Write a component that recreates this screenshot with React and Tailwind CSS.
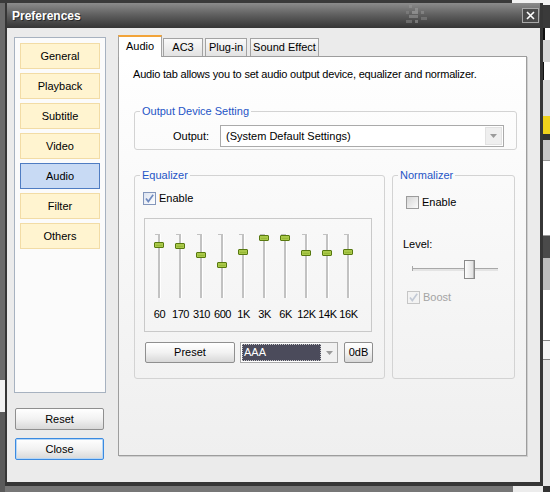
import React from 'react';

const bands = [
  ['60', 11],
  ['170', 12],
  ['310', 21],
  ['600', 31],
  ['1K', 18],
  ['3K', 4],
  ['6K', 4],
  ['12K', 19],
  ['14K', 19],
  ['16K', 18],
];

const sections = ['General', 'Playback', 'Subtitle', 'Video', 'Audio', 'Filter', 'Others'];

function Check({ checked, disabled }) {
  const box = disabled
    ? 'border-[#c6c6c6] bg-[#f3f3f3]'
    : checked
    ? 'border-[#8396bb] bg-linear-to-br from-[#dce3f0] to-white'
    : 'border-[#9c9c9c] bg-linear-to-br from-[#d6d6d6] to-[#fbfbfb]';
  return (
    <span className={`flex h-[13px] w-[13px] shrink-0 items-center justify-center border ${box}`}>
      {checked && (
        <svg viewBox="0 0 11 11" className="h-[11px] w-[11px]">
          <path d="M2 5.5 L4.3 8.5 L9.2 1.8" fill="none" stroke={disabled ? '#c3cad6' : '#6f8ac0'} strokeWidth="1.7" />
        </svg>
      )}
    </span>
  );
}

function Arrow() {
  return (
    <svg viewBox="0 0 7 4" className="h-[4px] w-[7px]">
      <path d="M0 0 H7 L3.5 4 Z" fill="#9a9a9a" />
    </svg>
  );
}

function Button({ children, className = '', focused }) {
  return (
    <button
      className={`flex items-center justify-center rounded-[2px] border bg-linear-to-b from-white via-[#f2f2f2] to-[#d8d8d8] text-[11px] ${
        focused ? 'border-[#3b8ae0] shadow-[inset_0_0_0_1px_#b5d6f6]' : 'border-[#8f8f8f]'
      } ${className}`}
    >
      {children}
    </button>
  );
}

function EqSlider({ label, pos }) {
  return (
    <div className="flex w-[21px] flex-col items-center">
      <div className="relative h-[64px] w-[21px]">
        <div className="absolute left-[9px] top-0 h-[64px] w-[2px] bg-[#c2c2c2] shadow-[1px_0_0_#ffffff]" />
        <div className="absolute left-[6px] top-0 h-px w-[3px] bg-[#c2c2c2]" />
        <div
          className="absolute left-[5px] h-[6px] w-[10px] rounded-[1px] border border-[#58790f] bg-linear-to-b from-[#c2dc5a] to-[#7ea41e] shadow-[inset_0_0_0_1px_#a9c94a]"
          style={{ top: pos - 3 }}
        />
      </div>
      <span className="mt-[9px] whitespace-nowrap leading-[14px] tracking-[-0.4px]">{label}</span>
    </div>
  );
}

export default function App() {
  return (
    <div className="flex h-[492px] w-[550px] overflow-hidden bg-[#767676] font-['Liberation_Sans',Arial,sans-serif] text-[11px] text-black">
      {/* desktop behind, left edge */}
      <div className="flex w-[5px] flex-col">
        <div className="h-[3px] bg-[#3a3a3a]" />
        <div className="h-[377px] bg-[#6b6b6b]" />
        <div className="h-[32px] bg-[#f1f1f1]" />
        <div className="flex-1 bg-[#5a5a5a]" />
      </div>

      <div className="flex w-[538px] flex-col">
        <div className="flex h-[3px]">
          <div className="flex-1 bg-[#3a3a3a]" />
          <div className="w-[31px] bg-[#f2f2f2]" />
        </div>

        {/* window */}
        <div className="flex h-[483px] flex-col border-b-4 border-l-2 border-r-[3px] border-[#363636]">
          <div className="relative flex h-[25px] items-start justify-between bg-linear-to-b from-[#8c8c8c] via-[#5d5d5d] to-[#353535] pl-[5px] pr-[1px]">
            <span className="mt-[6px] text-[12px] font-bold leading-[14px] text-white [text-shadow:1px_1px_0_#2a2a2a]">
              Preferences
            </span>
            <svg viewBox="0 0 27 20" className="absolute left-[396px] top-[2px] h-[20px] w-[27px] opacity-50">
              <rect x="6" y="0" width="3" height="3" fill="#9a9a9a" />
              <rect x="12" y="3" width="3" height="3" fill="#a5a5a5" />
              <rect x="3" y="6" width="3" height="3" fill="#8a8a8a" />
              <rect x="9" y="6" width="6" height="3" fill="#b0b0b0" />
              <rect x="18" y="6" width="3" height="3" fill="#9a9a9a" />
              <rect x="6" y="10" width="9" height="3" fill="#a0a0a0" />
              <rect x="18" y="12" width="6" height="3" fill="#8c8c8c" />
              <rect x="3" y="15" width="6" height="3" fill="#8f8f8f" />
              <rect x="12" y="15" width="3" height="3" fill="#a8a8a8" />
            </svg>
            <span className="mt-[5px] flex h-[15px] w-[17px] items-center justify-center border border-[#a8a8a8] bg-[#4a4a4a]">
              <svg viewBox="0 0 9 9" className="h-[9px] w-[9px]">
                <path d="M1 1 L8 8 M8 1 L1 8" stroke="#ffffff" strokeWidth="1.6" />
              </svg>
            </span>
          </div>

          <div className="flex h-[454px] bg-[#ebebeb] pl-[7px] pt-[9px]">
            {/* left column */}
            <div className="flex w-[92px] flex-col">
              <div className="flex h-[356px] flex-col items-center gap-[4px] border border-[#a7b2c0] bg-[#fbfbfb] pt-[5px]">
                {sections.map((s) => (
                  <div
                    key={s}
                    className={`flex h-[26px] w-[80px] items-center justify-center border ${
                      s === 'Audio' ? 'border-[#4f7cc2] bg-[#c8daf4]' : 'border-[#f2dca6] bg-[#fff4d0]'
                    }`}
                  >
                    {s}
                  </div>
                ))}
              </div>
              <Button className="ml-px mt-[15px] h-[22px] w-[89px]">Reset</Button>
              <Button className="ml-px mt-[8px] h-[22px] w-[89px]" focused>
                Close
              </Button>
            </div>

            {/* right column */}
            <div className="-mt-[2px] ml-[12px] flex w-[409px] flex-col">
              <div className="flex h-[21px] items-end">
                <div className="relative z-10 -mb-px flex h-[22px] w-[44px] items-start justify-center border border-b-0 border-t-2 border-[#a3a3a3] border-t-[#f2a43a] bg-white pt-[1px]">
                  Audio
                </div>
                <div className="ml-px flex h-[18px] w-[40px] items-center justify-center border border-b-0 border-[#a3a3a3] bg-linear-to-b from-[#fafafa] to-[#e2e2e2]">
                  AC3
                </div>
                <div className="ml-[2px] flex h-[18px] w-[42px] items-center justify-center border border-b-0 border-[#a3a3a3] bg-linear-to-b from-[#fafafa] to-[#e2e2e2]">
                  Plug-in
                </div>
                <div className="ml-[3px] flex h-[18px] w-[69px] items-center justify-center border border-b-0 border-[#a3a3a3] bg-linear-to-b from-[#fafafa] to-[#e2e2e2]">
                  Sound Effect
                </div>
              </div>

              <div className="flex h-[400px] flex-col border border-[#9d9d9d] bg-linear-to-b from-white to-[#efefef] pl-[14px] pt-[10px] shadow-[1px_1px_0_#cfcfcf]">
                <p className="leading-[14px] tracking-[-0.2px]">
                  Audio tab allows you to set audio output device, equalizer and normalizer.
                </p>

                <fieldset className="ml-px mt-[23px] w-[383px] rounded-[3px] border border-[#d3d3d3] pb-[2px]">
                  <legend className="ml-[5px] px-[2px] leading-[14px] text-[#1f55c6]">Output Device Setting</legend>
                  <div className="mt-[7px] flex items-center pl-[38px]">
                    <span className="w-[47px]">Output:</span>
                    <div className="flex h-[22px] w-[284px] items-center border border-[#aaaaaa] bg-white">
                      <span className="flex-1 pl-[5px]">(System Default Settings)</span>
                      <span className="mr-px flex h-[18px] w-[17px] items-center justify-center border border-[#e2e2e2] bg-[#efefef]">
                        <Arrow />
                      </span>
                    </div>
                  </div>
                </fieldset>

                <div className="ml-px mt-[18px] flex gap-[7px]">
                  <fieldset className="w-[251px] rounded-[3px] border border-[#d3d3d3] pb-[15px]">
                    <legend className="ml-[5px] px-[2px] leading-[14px] text-[#1f55c6]">Equalizer</legend>
                    <div className="pl-[8px]">
                      <label className="mt-[10px] flex h-[13px] items-center gap-[3px]">
                        <Check checked />
                        <span>Enable</span>
                      </label>
                      <div className="ml-px mt-[13px] h-[114px] w-[228px] border border-[#c9c9c9] pl-[4px] pt-[15px]">
                        <div className="grid grid-cols-[repeat(10,21px)]">
                          {bands.map(([label, pos]) => (
                            <EqSlider key={label} label={label} pos={pos} />
                          ))}
                        </div>
                      </div>
                      <div className="ml-[2px] mt-[10px] flex h-[21px]">
                        <Button className="h-[21px] w-[90px]">Preset</Button>
                        <div className="ml-[5px] flex h-[21px] w-[98px] items-center border border-[#aaaaaa] bg-white">
                          <span className="ml-px flex h-[17px] flex-1 items-center border border-dotted border-[#c8c8c8] bg-[#4b4b5b] pl-px text-white">
                            AAA
                          </span>
                          <span className="flex h-[19px] w-[16px] items-center justify-center bg-[#f1f1f1]">
                            <Arrow />
                          </span>
                        </div>
                        <Button className="ml-[6px] h-[21px] w-[29px]">0dB</Button>
                      </div>
                    </div>
                  </fieldset>

                  <fieldset className="w-[123px] rounded-[3px] border border-[#d3d3d3]">
                    <legend className="ml-[5px] px-[2px] leading-[14px] text-[#1f55c6]">Normalizer</legend>
                    <div className="pl-[10px]">
                      <label className="ml-[3px] mt-[14px] flex h-[13px] items-center gap-[3px]">
                        <Check />
                        <span>Enable</span>
                      </label>
                      <p className="mt-[28px] leading-[14px]">Level:</p>
                      <div className="relative ml-[9px] mt-[9px] h-[19px] w-[86px]">
                        <div className="absolute left-0 top-[8px] h-[3px] w-[86px] border-t border-[#a8a8a8] bg-[#e4e4e4]" />
                        <div className="absolute left-0 top-[6px] h-[5px] w-px bg-[#a8a8a8]" />
                        <div className="absolute left-[52px] top-0 h-[19px] w-[11px] border border-[#8a8a8a] bg-linear-to-r from-[#fdfdfd] to-[#dedede] shadow-[inset_-1px_0_0_#b8b8b8]" />
                      </div>
                      <label className="ml-[4px] mt-[12px] flex h-[13px] items-center gap-[3px]">
                        <Check checked disabled />
                        <span className="text-[#a4a4a4]">Boost</span>
                      </label>
                    </div>
                  </fieldset>
                </div>
              </div>
            </div>
          </div>
        </div>

        <div className="flex flex-1">
          <div className="flex-1 bg-[#777777]" />
          <div className="w-[30px] bg-[#ececec]" />
        </div>
      </div>

      {/* desktop behind, right edge */}
      <div className="flex w-[7px] flex-col">
        <div className="h-[5px] bg-[#f2f2f2]" />
        <div className="h-[23px] bg-[#3a3a3a]" />
        <div className="h-[12px] border-l-2 border-[#111111] bg-white" />
        <div className="h-[22px] bg-[#d6d6d6]" />
        <div className="h-[18px] border-l border-[#111111] bg-white" />
        <div className="h-[36px] bg-[#dcdcdc]" />
        <div className="h-[18px] bg-[#f0d21c]" />
        <div className="h-[6px] bg-[#333333]" />
        <div className="h-[20px] bg-[#c8c8c8]" />
        <div className="h-[76px] border-y border-[#9a9a9a] bg-white" />
        <div className="h-[22px] bg-[#4a4a4a]" />
        <div className="h-[32px] bg-[#bdbdbd]" />
        <div className="h-[50px] bg-white" />
        <div className="h-[20px] border-y border-[#888888] bg-[#f4f4f4]" />
        <div className="h-[126px] bg-[#e6e6e6]" />
        <div className="flex-1 bg-[#333333]" />
      </div>
    </div>
  );
}
